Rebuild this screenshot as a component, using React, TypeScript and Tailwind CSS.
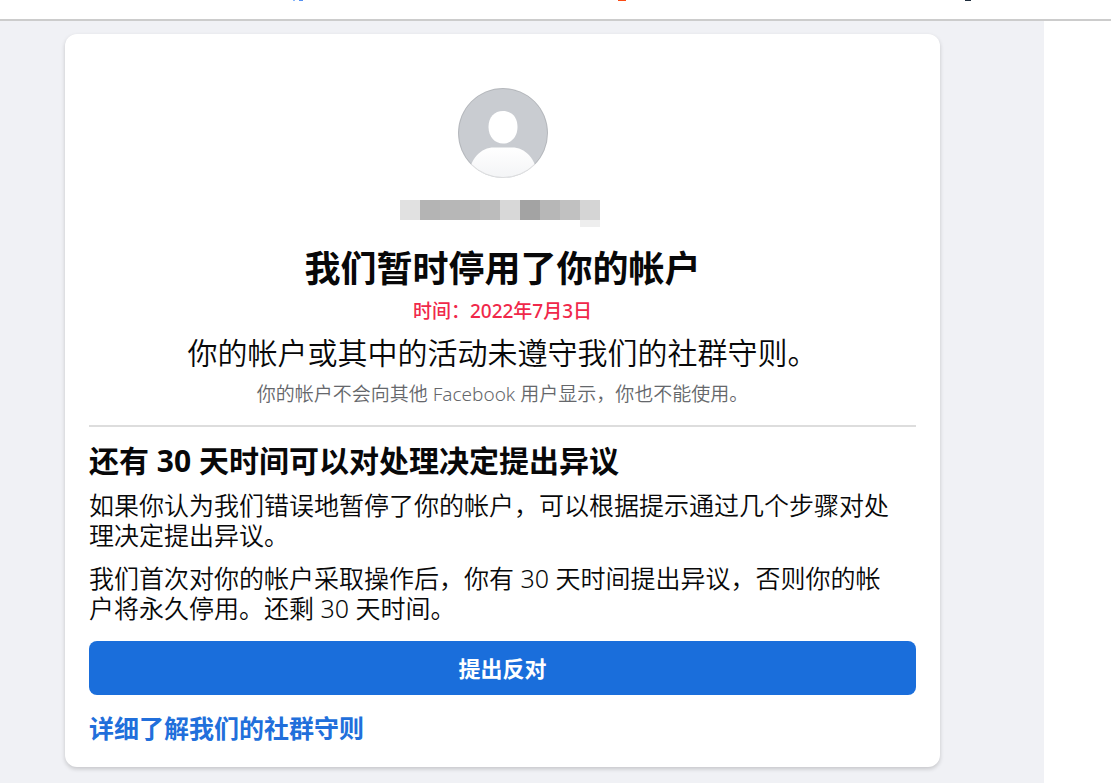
import { useState } from "react";

interface AccountNotice {
  date: string;
  daysLeft: number;
}

const notice: AccountNotice = {
  date: "2022年7月3日",
  daysLeft: 30,
};

function Avatar() {
  return (
    <svg
      width="90"
      height="90"
      viewBox="0 0 90 90"
      role="img"
      aria-label="头像"
      className="shrink-0"
    >
      <defs>
        <clipPath id="avatar-clip">
          <circle cx="45" cy="45" r="45" />
        </clipPath>
        <linearGradient id="avatar-body" x1="0" y1="0" x2="0" y2="1">
          <stop offset="0" stopColor="#ffffff" />
          <stop offset="1" stopColor="#f3f4f6" />
        </linearGradient>
      </defs>
      <g clipPath="url(#avatar-clip)">
        <rect width="90" height="90" fill="#c9ccd1" />
        <path
          d="M45 23C53.500 23 59.500 29 59.500 39C59.500 49 53 55.500 45 55.500C37 55.500 30.500 49 30.500 39C30.500 29 36.500 23 45 23Z"
          fill="#ffffff"
        />
        <path
          d="M10 90C12 70 23 59.500 36 59.500H54C67 59.500 78 70 80 90Z"
          fill="url(#avatar-body)"
        />
      </g>
      <circle
        cx="45"
        cy="45"
        r="44.5"
        fill="none"
        stroke="#000000"
        strokeOpacity="0.1"
      />
    </svg>
  );
}

// Pixelated user name
function HiddenName() {
  return (
    <div
      className="mt-[22px] mr-[5px] flex h-[27px] items-start"
      aria-hidden="true"
    >
      <span className="h-5 w-5 bg-[#e1e1e1]" />
      <span className="h-5 w-5 bg-[#b4b4b4]" />
      <span className="h-5 w-5 bg-[#b7b7b7]" />
      <span className="h-5 w-5 bg-[#b8b8b8]" />
      <span className="h-5 w-5 bg-[#bcbcbc]" />
      <span className="h-5 w-5 bg-[#d8d8d8]" />
      <span className="h-5 w-5 bg-[#a3a3a3]" />
      <span className="h-5 w-5 bg-[#b7b7b7]" />
      <span className="h-5 w-5 bg-[#c1c1c1]" />
      <span className="h-[27px] w-5 border-b-[7px] border-[#eeeeee] bg-[#d5d5d5]" />
    </div>
  );
}

// Bottom edge of the bar that is scrolled out of view
function TopEdge() {
  return (
    <header
      className="flex h-[21px] items-start border-b-2 border-[#cccccc] bg-white"
      aria-hidden="true"
    >
      <span className="ml-[293px] h-px w-[2px] bg-[#8ab8fb]" />
      <span className="ml-1 h-px w-[4px] bg-[#5590f2]" />
      <span className="ml-[315px] h-px w-[8px] bg-[#fb4a14]" />
      <span className="ml-[339px] h-px w-[6px] bg-[#1f2d3d]" />
    </header>
  );
}

export default function App() {
  const [appealed, setAppealed] = useState(false);

  return (
    <div
      lang="zh-CN"
      className="flex min-h-screen flex-col bg-white font-['Noto_Sans','Noto_Sans_CJK_SC',sans-serif] text-[#080809]"
    >
      <TopEdge />
      <main className="mr-[67px] flex-1 bg-[#f0f1f5] pt-[13px] pr-[104px] pb-4 pl-[65px]">
        <section className="rounded-xl bg-white px-6 pt-[54px] pb-6 shadow-[0_2px_4px_rgba(0,0,0,0.18)]">
          <div className="flex flex-col items-center text-center">
            <Avatar />
            <HiddenName />
            <h1 className="mt-[22px] text-[36px] leading-10 font-bold">
              我们暂时停用了你的帐户
            </h1>
            <p className="mt-[10px] text-[19px] leading-6 font-medium text-[#f0284a]">
              {`时间：${notice.date}`}
            </p>
            <p className="mt-3 text-[30px] leading-9 font-[350]">
              你的帐户或其中的活动未遵守我们的社群守则。
            </p>
            <p className="mt-[11px] text-[19px] leading-6 font-[350] text-[#65676b]">
              你的帐户不会向其他 Facebook 用户显示，你也不能使用。
            </p>
          </div>

          <hr className="mt-[19px] border-t-2 border-[#dddddd]" />

          <h2 className="mt-4 text-[30px] leading-9 font-bold">
            {`还有 ${notice.daysLeft} 天时间可以对处理决定提出异议`}
          </h2>
          <p className="mt-[11px] pr-4 text-[25px] leading-[30px] font-[350]">
            如果你认为我们错误地暂停了你的帐户，可以根据提示通过几个步骤对处理决定提出异议。
          </p>
          <p className="mt-[13px] pr-4 text-[25px] leading-[30px] font-[350]">
            {`我们首次对你的帐户采取操作后，你有 ${notice.daysLeft} 天时间提出异议，否则你的帐户将永久停用。还剩 ${notice.daysLeft} 天时间。`}
          </p>

          <button
            type="button"
            aria-pressed={appealed}
            onClick={() => setAppealed(true)}
            className="mt-[18px] h-[54px] w-full cursor-pointer rounded-lg bg-[#1a6edb] text-[22px] leading-[30px] font-bold text-white"
          >
            提出反对
          </button>
          <a
            href="#community-standards"
            className="mt-[18px] block w-fit text-[25px] leading-[30px] font-bold text-[#216fdb]"
          >
            详细了解我们的社群守则
          </a>
        </section>
      </main>
    </div>
  );
}
